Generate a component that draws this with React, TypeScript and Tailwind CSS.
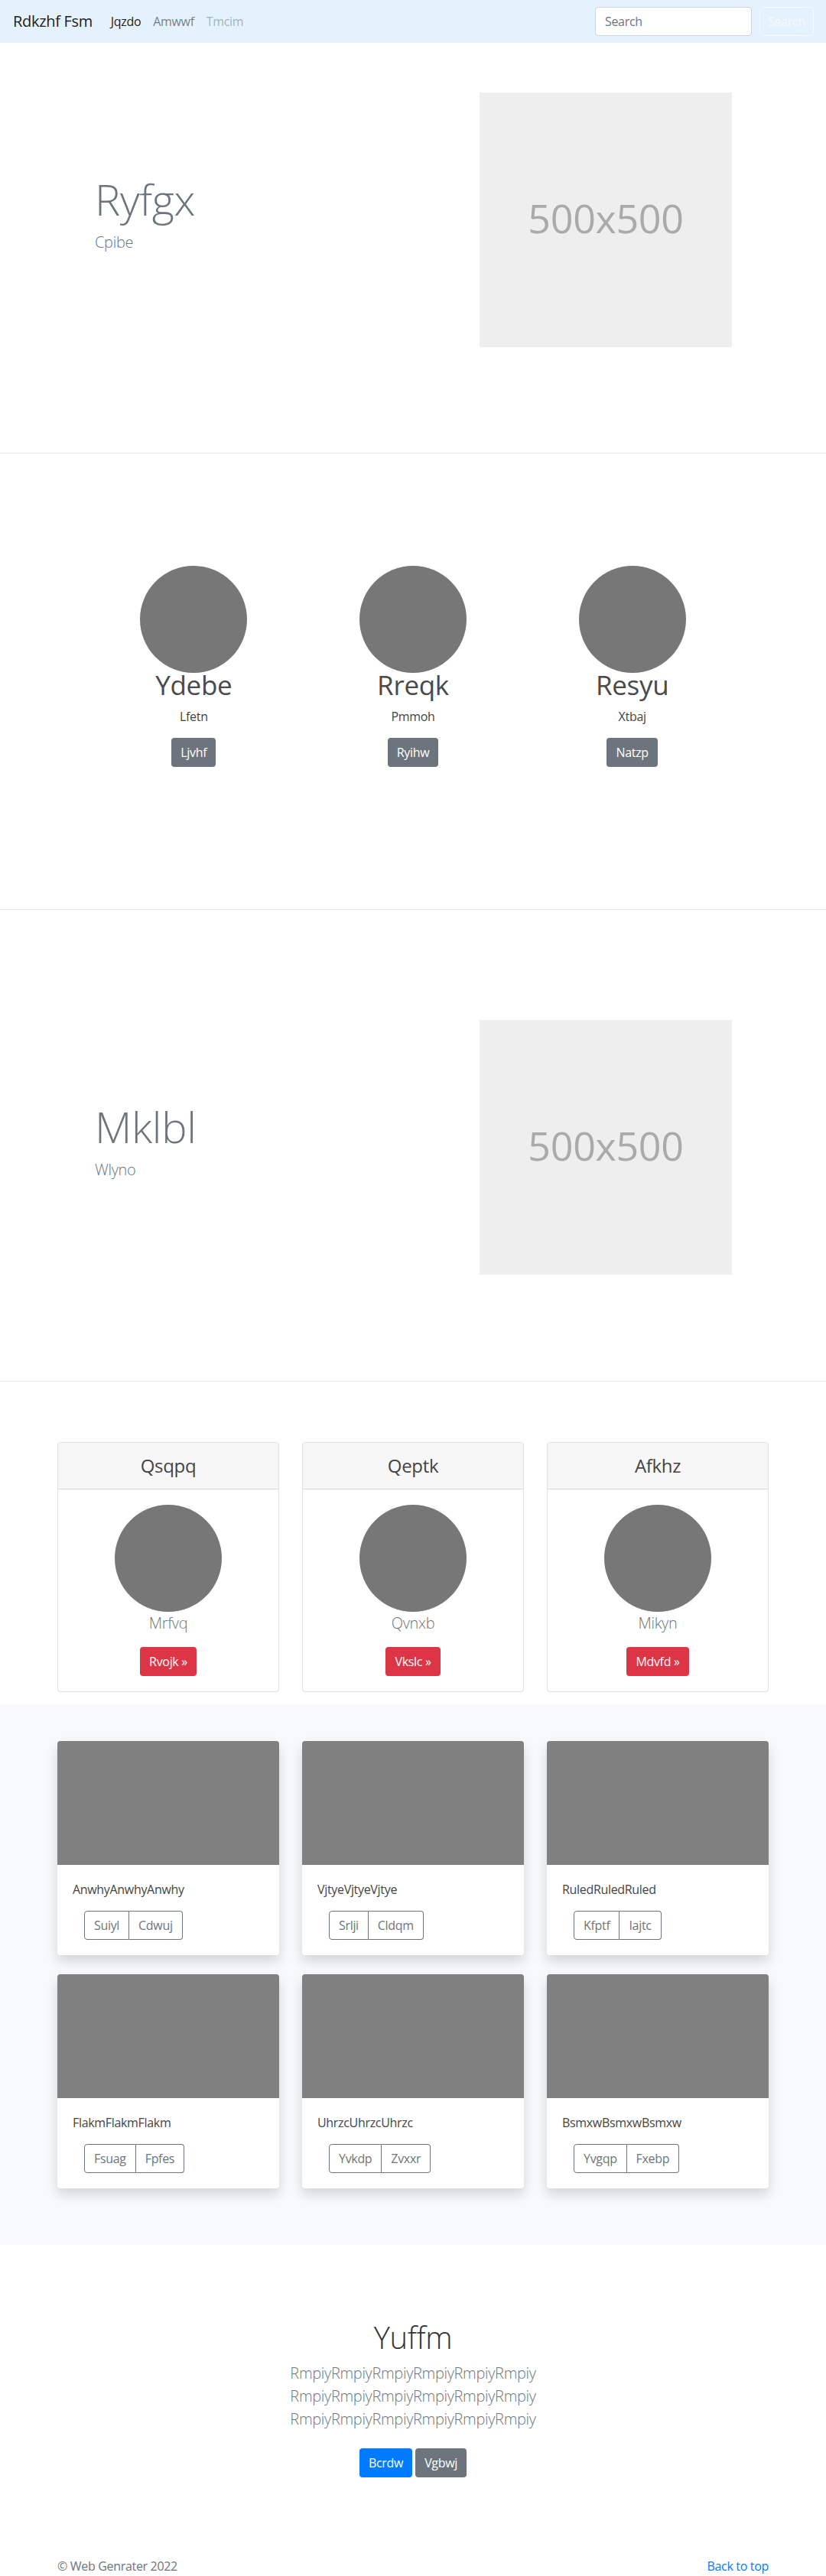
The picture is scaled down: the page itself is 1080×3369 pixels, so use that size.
import React from "react"

const people = [
  { name: "Ydebe", role: "Lfetn", action: "Ljvhf" },
  { name: "Rreqk", role: "Pmmoh", action: "Ryihw" },
  { name: "Resyu", role: "Xtbaj", action: "Natzp" },
]

const plans = [
  { title: "Qsqpq", label: "Mrfvq", action: "Rvojk" },
  { title: "Qeptk", label: "Qvnxb", action: "Vkslc" },
  { title: "Afkhz", label: "Mikyn", action: "Mdvfd" },
]

const albums = [
  { text: "AnwhyAnwhyAnwhy", a: "Suiyl", b: "Cdwuj" },
  { text: "VjtyeVjtyeVjtye", a: "Srlji", b: "Cldqm" },
  { text: "RuledRuledRuled", a: "Kfptf", b: "Iajtc" },
  { text: "FlakmFlakmFlakm", a: "Fsuag", b: "Fpfes" },
  { text: "UhrzcUhrzcUhrzc", a: "Yvkdp", b: "Zvxxr" },
  { text: "BsmxwBsmxwBsmxw", a: "Yvgqp", b: "Fxebp" },
]

function Placeholder() {
  return (
    <div className="w-[330px] h-[333px] bg-[#eeeeee] flex items-center justify-center shrink-0">
      <span className="text-[52px] text-[#aaaaaa] leading-none mb-[6px]">500x500</span>
    </div>
  )
}

function Feature({ title, sub }: { title: string; sub: string }) {
  return (
    <div className="flex items-center">
      <div className="w-[627px] pl-[124px]">
        <h1 className="text-[56px] font-light leading-[1.2] text-[#6c757d] mb-2">{title}</h1>
        <p className="text-[20px] font-light leading-[1.5] text-[#6c757d] mb-4">{sub}</p>
      </div>
      <Placeholder />
    </div>
  )
}

export default function App() {
  return (
    <div className="font-['Open_Sans',sans-serif] tracking-[-0.02em] text-[#212529] bg-white">
      {/* Navbar */}
      <nav className="h-[56px] bg-[#e3f2fd] flex items-center justify-between pl-[17px] pr-[16px]">
        <div className="flex items-center">
          <span className="text-[20px] text-black/90 mr-[16px]">Rdkzhf Fsm</span>
          <a className="px-2 text-[16px] text-black/90">Jqzdo</a>
          <a className="px-2 text-[16px] text-black/50">Amwwf</a>
          <a className="px-2 text-[16px] text-black/30">Tmcim</a>
        </div>
        <div className="flex items-center">
          <div className="w-[205px] h-[38px] bg-white border border-[#ced4da] rounded-[4px] px-3 flex items-center text-[16px] text-[#6c757d]">
            Search
          </div>
          <button className="ml-[10px] w-[71px] h-[38px] border border-[#f8f9fa] rounded-[4px] text-[16px] text-[#f8f9fa]">
            Search
          </button>
        </div>
      </nav>

      {/* Feature one */}
      <section className="border-b border-[#e6e6e6] pt-[65px] pb-[138px]">
        <Feature title="Ryfgx" sub="Cpibe" />
      </section>

      {/* Team */}
      <section className="border-b border-[#e6e6e6] pt-[147px] pb-[186px]">
        <div className="w-[860px] mx-auto grid grid-cols-3">
          {people.map((p) => (
            <div key={p.name} className="flex flex-col items-center">
              <div className="w-[140px] h-[140px] rounded-full bg-[#777777]" />
              <h2 className="text-[35px] leading-[32px] text-[#4a4a4a]">{p.name}</h2>
              <p className="mt-[13px] text-[16px] leading-[24px] text-[#444444]">{p.role}</p>
              <button className="mt-[16px] h-[38px] px-3 rounded-[4px] bg-[#6c757d] text-white text-[16px]">
                {p.action}
              </button>
            </div>
          ))}
        </div>
      </section>

      {/* Feature two */}
      <section className="border-b border-[#e6e6e6] pt-[144px] pb-[139px]">
        <Feature title="Mklbl" sub="Wlyno" />
      </section>

      {/* Pricing-like cards */}
      <section className="pt-[79px] pb-[16px]">
        <div className="w-[930px] mx-auto grid grid-cols-3 gap-[30px]">
          {plans.map((c) => (
            <div key={c.title} className="border border-black/[0.125] rounded-[4px] overflow-hidden">
              <div className="h-[61px] bg-[#f7f7f7] border-b border-black/[0.125] flex items-center justify-center">
                <h4 className="text-[24px] font-medium text-[#444444]">{c.title}</h4>
              </div>
              <div className="pt-[20px] pb-[20px] flex flex-col items-center">
                <div className="w-[140px] h-[140px] rounded-full bg-[#777777]" />
                <p className="text-[20px] font-light leading-[30px] text-[#6c757d]">{c.label}</p>
                <button className="mt-[16px] h-[38px] px-3 rounded-[4px] bg-[#dc3545] text-white text-[16px]">
                  {c.action} »
                </button>
              </div>
            </div>
          ))}
        </div>
      </section>

      {/* Album */}
      <section className="bg-[#f8f9fa] pt-[48px] pb-[74px]">
        <div className="w-[930px] mx-auto grid grid-cols-3 gap-x-[30px] gap-y-[25px]">
          {albums.map((a) => (
            <div key={a.text} className="bg-white rounded-[4px] overflow-hidden shadow-[0_8px_16px_rgba(0,0,0,0.15)]">
              <div className="h-[162px] bg-[#808080]" />
              <div className="p-[20px]">
                <p className="text-[16px] leading-[24px] text-[#444444] mb-4">{a.text}</p>
                <div className="ml-[15px] inline-flex h-[38px]">
                  <button className="px-3 border border-[#6c757d] rounded-l-[4px] text-[16px] text-[#6c757d]">
                    {a.a}
                  </button>
                  <button className="px-3 border border-l-0 border-[#6c757d] rounded-r-[4px] text-[16px] text-[#6c757d]">
                    {a.b}
                  </button>
                </div>
              </div>
            </div>
          ))}
        </div>
      </section>

      {/* Call to action */}
      <section className="pt-[97px] text-center">
        <h1 className="text-[40px] font-light leading-[48px] text-[#333333] mb-2">Yuffm</h1>
        <p className="text-[20px] font-light leading-[30px] text-[#6c757d]">
          RmpiyRmpiyRmpiyRmpiyRmpiyRmpiy
          <br />
          RmpiyRmpiyRmpiyRmpiyRmpiyRmpiy
          <br />
          RmpiyRmpiyRmpiyRmpiyRmpiyRmpiy
        </p>
        <div className="mt-[23px] flex justify-center gap-[4px]">
          <button className="h-[38px] px-3 rounded-[4px] bg-[#007bff] text-white text-[16px]">Bcrdw</button>
          <button className="h-[38px] px-3 rounded-[4px] bg-[#6c757d] text-white text-[16px]">Vgbwj</button>
        </div>
      </section>

      {/* Footer */}
      <footer className="pt-[105px]">
        <div className="w-[930px] mx-auto flex justify-between text-[16px] leading-[23px]">
          <span className="text-[#6c757d]">© Web Genrater 2022</span>
          <a className="text-[#007bff]">Back to top</a>
        </div>
      </footer>
    </div>
  )
}
